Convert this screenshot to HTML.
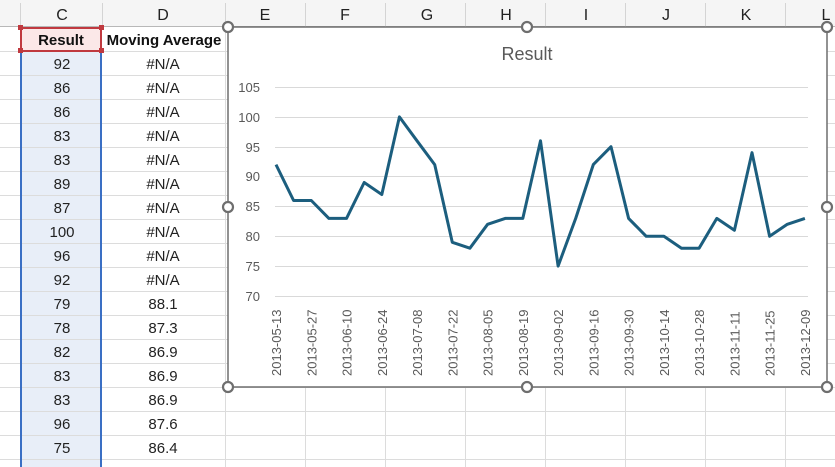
<!DOCTYPE html>
<html><head><style>
body{margin:0;width:835px;height:467px;overflow:hidden;background:#fff;font-family:"Liberation Sans",sans-serif;position:relative}
.a{position:absolute}
</style></head><body>
<svg class="a" style="left:0;top:0" width="835" height="467" xmlns="http://www.w3.org/2000/svg" font-family="Liberation Sans, sans-serif">
<rect x="0" y="0" width="835" height="26" fill="#f5f5f5"/>
<line x1="0" y1="26.5" x2="835" y2="26.5" stroke="#b8b8b8"/>
<g stroke="#d4d4d4">
<line x1="20.5" y1="3" x2="20.5" y2="26"/><line x1="102.5" y1="3" x2="102.5" y2="26"/><line x1="225.5" y1="3" x2="225.5" y2="26"/><line x1="305.5" y1="3" x2="305.5" y2="26"/><line x1="385.5" y1="3" x2="385.5" y2="26"/><line x1="465.5" y1="3" x2="465.5" y2="26"/><line x1="545.5" y1="3" x2="545.5" y2="26"/><line x1="625.5" y1="3" x2="625.5" y2="26"/><line x1="705.5" y1="3" x2="705.5" y2="26"/><line x1="785.5" y1="3" x2="785.5" y2="26"/>
</g>
<g font-size="16" fill="#222" text-anchor="middle">
<text x="62" y="20">C</text><text x="163" y="20">D</text><text x="265" y="20">E</text><text x="345" y="20">F</text><text x="427" y="20">G</text><text x="506" y="20">H</text><text x="586" y="20">I</text><text x="666" y="20">J</text><text x="746" y="20">K</text><text x="826" y="20">L</text>
</g>
<rect x="20" y="51" width="82" height="416" fill="#e8eef8"/>
<g stroke="#dcdcdc">
<line x1="0" y1="51.5" x2="835" y2="51.5"/><line x1="0" y1="75.5" x2="835" y2="75.5"/><line x1="0" y1="99.5" x2="835" y2="99.5"/><line x1="0" y1="123.5" x2="835" y2="123.5"/><line x1="0" y1="147.5" x2="835" y2="147.5"/><line x1="0" y1="171.5" x2="835" y2="171.5"/><line x1="0" y1="195.5" x2="835" y2="195.5"/><line x1="0" y1="219.5" x2="835" y2="219.5"/><line x1="0" y1="243.5" x2="835" y2="243.5"/><line x1="0" y1="267.5" x2="835" y2="267.5"/><line x1="0" y1="291.5" x2="835" y2="291.5"/><line x1="0" y1="315.5" x2="835" y2="315.5"/><line x1="0" y1="339.5" x2="835" y2="339.5"/><line x1="0" y1="363.5" x2="835" y2="363.5"/><line x1="0" y1="387.5" x2="835" y2="387.5"/><line x1="0" y1="411.5" x2="835" y2="411.5"/><line x1="0" y1="435.5" x2="835" y2="435.5"/><line x1="0" y1="459.5" x2="835" y2="459.5"/>
<line x1="225.5" y1="26" x2="225.5" y2="467"/><line x1="305.5" y1="26" x2="305.5" y2="467"/><line x1="385.5" y1="26" x2="385.5" y2="467"/><line x1="465.5" y1="26" x2="465.5" y2="467"/><line x1="545.5" y1="26" x2="545.5" y2="467"/><line x1="625.5" y1="26" x2="625.5" y2="467"/><line x1="705.5" y1="26" x2="705.5" y2="467"/><line x1="785.5" y1="26" x2="785.5" y2="467"/>
</g>
<rect x="21" y="28" width="80" height="23" fill="#fbe8e8" stroke="#c0393f" stroke-width="2"/>
<rect x="18" y="25" width="5" height="5" fill="#c0393f"/><rect x="99" y="25" width="5" height="5" fill="#c0393f"/><rect x="18" y="48" width="5" height="5" fill="#c0393f"/><rect x="99" y="48" width="5" height="5" fill="#c0393f"/>
<line x1="21" y1="53" x2="21" y2="467" stroke="#3a6fc4" stroke-width="2"/><line x1="101" y1="53" x2="101" y2="467" stroke="#3a6fc4" stroke-width="2"/>
<g font-size="15" font-weight="bold" fill="#111" text-anchor="middle"><text x="61" y="45">Result</text><text x="164" y="45">Moving Average</text></g>
<g font-size="15" fill="#222" text-anchor="middle">
<text x="62" y="69">92</text><text x="62" y="93">86</text><text x="62" y="117">86</text><text x="62" y="141">83</text><text x="62" y="165">83</text><text x="62" y="189">89</text><text x="62" y="213">87</text><text x="62" y="237">100</text><text x="62" y="261">96</text><text x="62" y="285">92</text><text x="62" y="309">79</text><text x="62" y="333">78</text><text x="62" y="357">82</text><text x="62" y="381">83</text><text x="62" y="405">83</text><text x="62" y="429">96</text><text x="62" y="453">75</text><text x="62" y="477">83</text>
<text x="163" y="69">#N/A</text><text x="163" y="93">#N/A</text><text x="163" y="117">#N/A</text><text x="163" y="141">#N/A</text><text x="163" y="165">#N/A</text><text x="163" y="189">#N/A</text><text x="163" y="213">#N/A</text><text x="163" y="237">#N/A</text><text x="163" y="261">#N/A</text><text x="163" y="285">#N/A</text><text x="163" y="309">88.1</text><text x="163" y="333">87.3</text><text x="163" y="357">86.9</text><text x="163" y="381">86.9</text><text x="163" y="405">86.9</text><text x="163" y="429">87.6</text><text x="163" y="453">86.4</text><text x="163" y="477">84.7</text>
</g>
<rect x="228" y="27" width="599" height="360" fill="#fff" stroke="#6e6e6e" stroke-width="1.5"/>
<text x="527" y="60" font-size="18" fill="#595959" text-anchor="middle">Result</text>
<g stroke="#d9d9d9">
<line x1="275" y1="87.5" x2="808" y2="87.5"/><line x1="275" y1="117.5" x2="808" y2="117.5"/><line x1="275" y1="147.5" x2="808" y2="147.5"/><line x1="275" y1="176.5" x2="808" y2="176.5"/><line x1="275" y1="206.5" x2="808" y2="206.5"/><line x1="275" y1="236.5" x2="808" y2="236.5"/><line x1="275" y1="266.5" x2="808" y2="266.5"/><line x1="275" y1="296.5" x2="808" y2="296.5"/>
</g>
<g font-size="13" fill="#595959" text-anchor="end">
<text x="260" y="92">105</text><text x="260" y="122">100</text><text x="260" y="152">95</text><text x="260" y="181">90</text><text x="260" y="211">85</text><text x="260" y="241">80</text><text x="260" y="271">75</text><text x="260" y="301">70</text>
</g>
<polyline fill="none" stroke="#1c5e7e" stroke-width="3" stroke-linejoin="round" points="276,164.6 293.6,200.5 311.3,200.5 328.9,218.4 346.5,218.4 364.2,182.5 381.8,194.5 399.4,116.9 417,140.8 434.7,164.6 452.3,242.3 469.9,248.2 487.6,224.3 505.2,218.4 522.8,218.4 540.5,140.8 558.1,266.1 575.7,218.4 593.3,164.6 611,146.7 628.6,218.4 646.2,236.3 663.9,236.3 681.5,248.2 699.1,248.2 716.8,218.4 734.4,230.3 752,152.7 769.6,236.3 787.3,224.3 804.9,218.4"/>
<g font-size="13" fill="#595959" text-anchor="start">
<text transform="translate(281,376) rotate(-90)">2013-05-13</text>
<text transform="translate(316.3,376) rotate(-90)">2013-05-27</text>
<text transform="translate(351.5,376) rotate(-90)">2013-06-10</text>
<text transform="translate(386.8,376) rotate(-90)">2013-06-24</text>
<text transform="translate(422,376) rotate(-90)">2013-07-08</text>
<text transform="translate(457.3,376) rotate(-90)">2013-07-22</text>
<text transform="translate(492.6,376) rotate(-90)">2013-08-05</text>
<text transform="translate(527.8,376) rotate(-90)">2013-08-19</text>
<text transform="translate(563.1,376) rotate(-90)">2013-09-02</text>
<text transform="translate(598.3,376) rotate(-90)">2013-09-16</text>
<text transform="translate(633.6,376) rotate(-90)">2013-09-30</text>
<text transform="translate(668.9,376) rotate(-90)">2013-10-14</text>
<text transform="translate(704.1,376) rotate(-90)">2013-10-28</text>
<text transform="translate(739.4,376) rotate(-90)">2013-11-11</text>
<text transform="translate(774.6,376) rotate(-90)">2013-11-25</text>
<text transform="translate(809.9,376) rotate(-90)">2013-12-09</text>
</g>
<g fill="#fff" stroke="#6e6e6e" stroke-width="2.2">
<circle cx="228" cy="27" r="5"/><circle cx="527" cy="27" r="5"/><circle cx="827" cy="27" r="5"/>
<circle cx="228" cy="207" r="5"/><circle cx="827" cy="207" r="5"/>
<circle cx="228" cy="387" r="5"/><circle cx="527" cy="387" r="5"/><circle cx="827" cy="387" r="5"/>
</g>
</svg>
</body></html>
